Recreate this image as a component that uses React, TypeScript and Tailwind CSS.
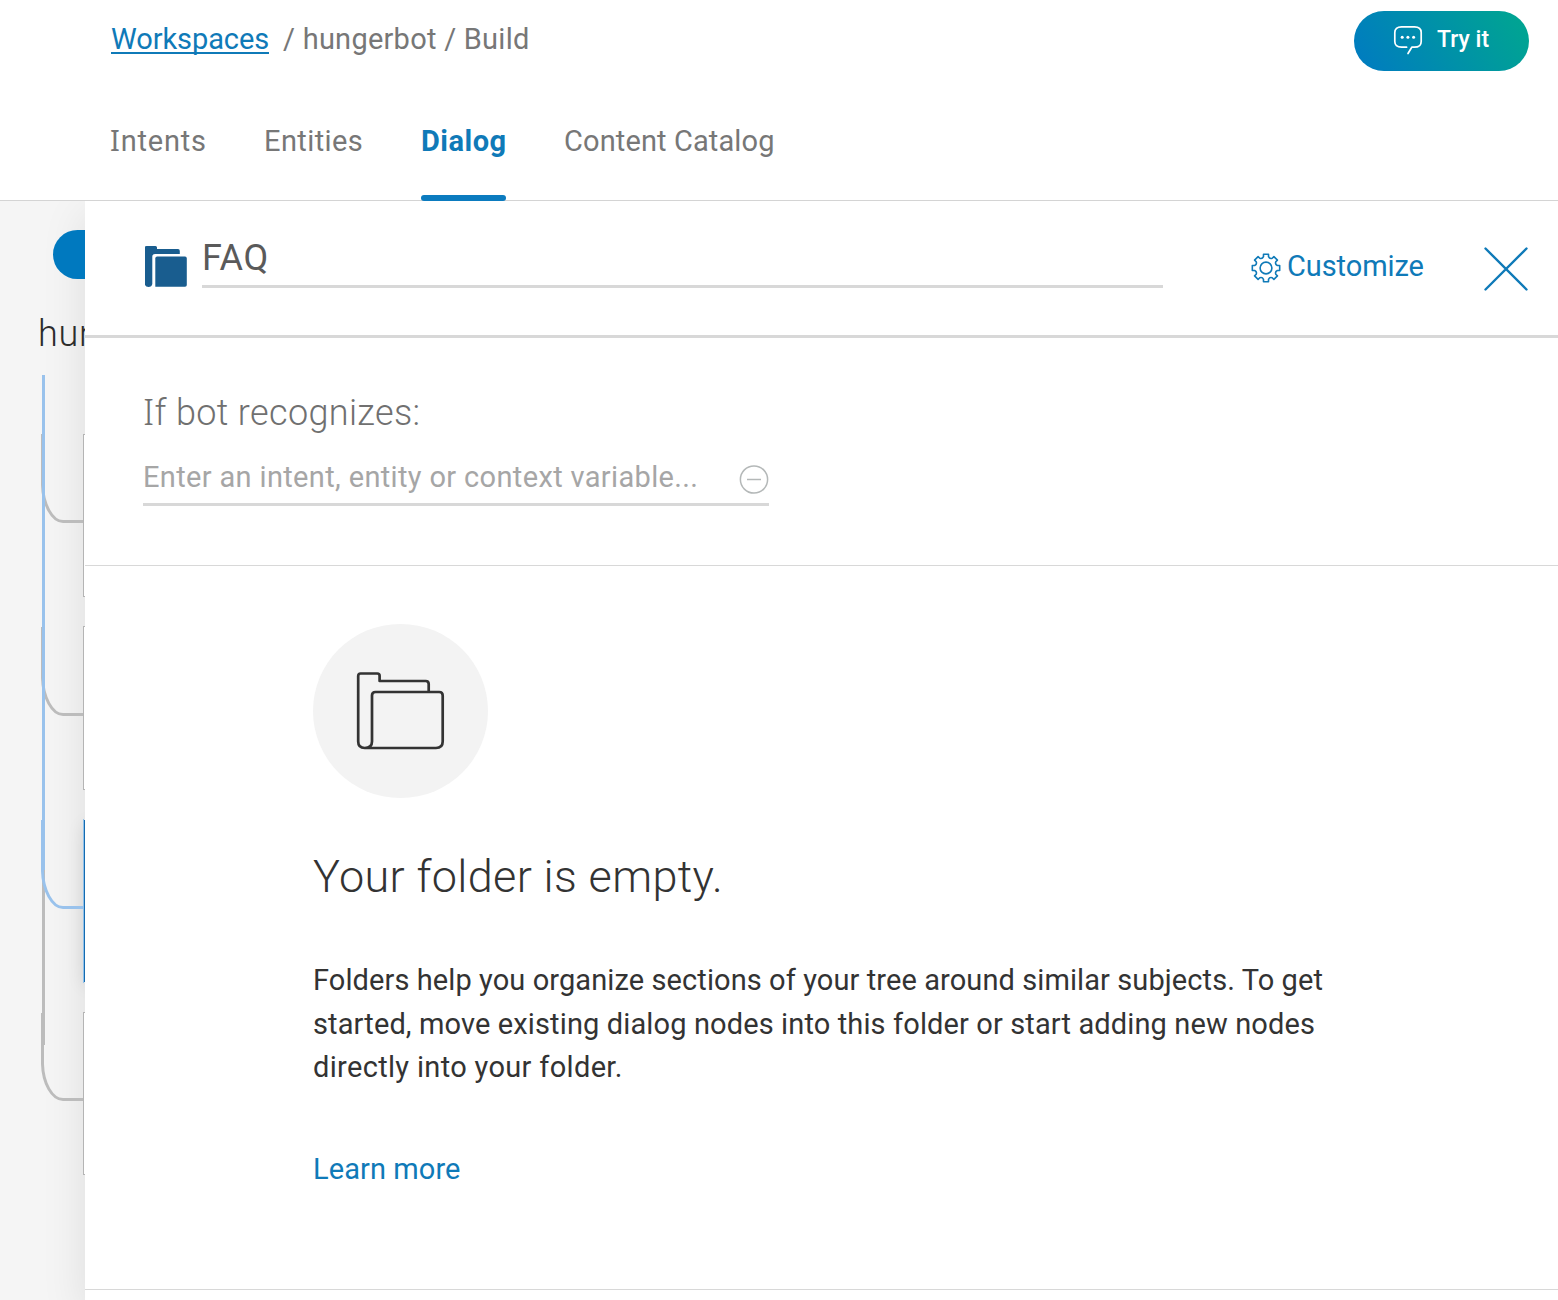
import React from "react";

const TABS = [
  { label: "Intents", active: false, cls: "w-[95px] tracking-[0.8px] -ml-px mr-[59px]" },
  { label: "Entities", active: false, cls: "w-[98px] tracking-[0.4px] mr-[59px]" },
  { label: "Dialog", active: true, cls: "w-[85px] tracking-[0.5px] mr-[58px]" },
  { label: "Content Catalog", active: false, cls: "tracking-[0.12px]" },
];

function SlabI({ text }: { text: string }) {
  if (!text.startsWith("I")) return <>{text}</>;
  return (
    <>
      <span className="font-['Noto_Sans',sans-serif] leading-[0]">I</span>
      {text.slice(1)}
    </>
  );
}

function ChatIcon() {
  return (
    <svg className="-mt-px" width="30" height="31" viewBox="0 0 30 31" fill="none" stroke="currentColor" strokeWidth="1.7" strokeLinecap="round" strokeLinejoin="round">
      <path d="M13.6 22.2H8.5C4 22.2 1.8 20 1.8 16.5V7.5C1.8 4 4 1.8 8.5 1.8H21.5C26 1.8 28.2 4 28.2 7.5V16.5C28.2 20 26 22.2 21.5 22.2H18.8L15 28.5" />
      <g fill="currentColor" stroke="none">
        <circle cx="9.2" cy="12.3" r="1.5" />
        <circle cx="14.9" cy="12.3" r="1.5" />
        <circle cx="20.6" cy="12.3" r="1.5" />
      </g>
    </svg>
  );
}

function gearPath() {
  const at = (r: number, a: number) =>
    `${(15 + r * Math.cos(a)).toFixed(2)} ${(15 + r * Math.sin(a)).toFixed(2)}`;
  let d = "";
  for (let i = 0; i < 8; i++) {
    const a = (i * Math.PI) / 4;
    const mid = a + Math.PI / 8;
    d += `${i === 0 ? "M" : "L"}${at(11.6, a - 0.22)}L${at(13.9, a - 0.18)}L${at(13.9, a + 0.18)}L${at(11.6, a + 0.22)}`;
    d += `Q${at(9.6, mid)} ${at(11.6, a + Math.PI / 4 - 0.22)}`;
  }
  return d + "Z";
}

function GearIcon() {
  return (
    <svg className="mt-[7px]" width="30" height="30" viewBox="0 0 30 30" fill="none" stroke="currentColor" strokeWidth="1.6" strokeLinejoin="round">
      <path d={gearPath()} />
      <circle cx="15" cy="15" r="5.9" />
    </svg>
  );
}

function FolderSolidIcon() {
  return (
    <svg className="mt-[45px] shrink-0 text-[#195d8f]" width="43" height="41" viewBox="0.5 0 43 41" fill="currentColor">
      <path d="M0 2Q0 0 2 0H11Q12.5 0 12.5 1.500V3H33.500Q35.300 3 35.300 5V8H10.500Q7.800 8 7.800 10.500V38Q7.300 41 4 41Q0 41 0 36.500Z" />
      <path d="M10.800 12.500Q10.800 10.600 12.700 10.600H40.500Q42.300 10.600 42.300 12.500V39Q42.300 40.800 40.500 40.800H10.800Z" />
    </svg>
  );
}

function FolderOutlineIcon() {
  return (
    <svg width="175" height="175" viewBox="0 0 175 175" fill="none" stroke="#333" strokeWidth="2.7" strokeLinejoin="round">
      <path d="M115.700 68V60Q115.700 57 112.700 57H66.600V51.800Q66.600 49.500 64.300 49.500H47.600Q45.200 49.500 45.200 52V117.500Q45.200 124 51.700 124H123Q129.700 124 129.700 117.500V71.500Q129.700 68 126.200 68H62.500Q59 68 59 71.500V117.500Q59 124 51.700 124" />
    </svg>
  );
}

function TreeLines() {
  return (
    <svg className="absolute left-0 top-0" width="85" height="1099" viewBox="0 201 85 1099" fill="none" strokeWidth="3">
      <g stroke="#bcbcbc">
        <path d="M42.500 434V485C43 504 52 521.500 63 521.500H83" />
        <path d="M42.500 627V678C43 697 52 714.500 63 714.500H83" />
        <path d="M43.500 860V1045" />
        <path d="M42.500 1013V1064C43 1083 52 1099.500 63 1099.500H83" />
      </g>
      <g stroke="#99c2ec">
        <path d="M43.500 375V870" />
        <path d="M42.500 820V871C43 890 52 907.500 63 907.500H83" />
      </g>
      <g stroke="#b4b4b4" strokeWidth="1" fill="#fff">
        <rect x="83.500" y="434.500" width="40" height="162" />
        <rect x="83.500" y="626.500" width="40" height="163" />
        <rect x="83.500" y="1012.500" width="40" height="162" />
      </g>
      <path d="M83.500 819V983" stroke="#8fc0ea" strokeWidth="1" />
      <path d="M84.500 820V982" stroke="#146bb0" strokeWidth="1" />
    </svg>
  );
}

export default function App() {
  return (
    <div className="flex h-[1300px] w-[1558px] flex-col overflow-hidden bg-white font-['Roboto',sans-serif] text-[29px] leading-[40px] text-[#777]">
      <header className="relative z-20 flex h-[201px] shrink-0 flex-col border-b border-[#d4d4d4] pl-[111px]">
        <div className="flex h-[121px] shrink-0 items-start justify-between pr-[29px]">
          <div className="flex pt-[19px]">
            <a className="h-[35px] w-[158px] whitespace-nowrap border-b-2 border-[#0f7ab8] tracking-[-0.080px] text-[#0f7ab8]">Workspaces</a>
            <span className="ml-[14px] tracking-[0.250px]">/ hungerbot / Build</span>
          </div>
          <button className="mt-[11px] flex h-[60px] w-[175px] items-center rounded-full bg-linear-[58deg,#007ac2_0%,#00a78f_100%] pl-[39px] text-[23px] font-medium leading-[30px] text-white">
            <ChatIcon />
            <span className="-mt-[2px] ml-[14px] whitespace-nowrap">Try it</span>
          </button>
        </div>
        <nav className="flex">
          {TABS.map((t) => (
            <div key={t.label} className={`relative h-[80px] whitespace-nowrap ${t.cls} ${t.active ? "font-bold text-[#0f7ab8]" : ""}`}>
              <SlabI text={t.label} />
              {t.active && <span className="absolute inset-x-0 top-[74px] h-[6px] rounded-[3px] bg-[#0b7bbf]" />}
            </div>
          ))}
        </nav>
      </header>

      <div className="relative flex flex-1 overflow-hidden bg-[#f5f5f5]">
        <aside className="relative z-10 h-full w-[85px] shrink-0 overflow-hidden">
          <div className="absolute left-[84px] top-[620px] h-[160px] w-[40px] shadow-[0_4px_18px_rgba(0,0,0,0.10)]" />
          <TreeLines />
          <div className="ml-[53px] mt-[29px] h-[49px] w-[160px] rounded-full bg-[#0079bf]" />
          <div className="ml-[38px] mt-[33px] text-[36px] font-[350] leading-[44px] tracking-[0.700px] text-[#2c2c2c]">hungerbot</div>
        </aside>
        <main className="flex-1 bg-white shadow-[0_14px_42px_rgba(0,0,0,0.10)]">
          <div className="flex h-[137px] items-start border-b-3 border-[#d8d8d8] pl-[60px] pr-[30px]">
            <FolderSolidIcon />
            <div className="ml-[14px] mt-[35px] w-[961px] border-b-3 border-[#d8d8d8] pb-[5px] text-[36px] leading-[44px] tracking-[0.600px] text-[#5a5a5a]">FAQ</div>
            <button className="ml-[88px] mt-[45px] flex items-start text-[#0f7ab8]">
              <GearIcon />
              <span className="ml-[6px] tracking-[-0.080px]">Customize</span>
            </button>
            <svg className="ml-auto mt-[46px]" width="44" height="44" viewBox="0 0 44 44" stroke="#0f7ab8" strokeWidth="2.400" strokeLinecap="round">
              <path d="M1.500 1.500L42.500 42.500M42.500 1.500L1.500 42.500" />
            </svg>
          </div>

          <section className="h-[228px] border-b border-[#d8d8d8] pl-[58px] pt-[53px]">
            <h2 className="text-[36px] font-[350] leading-[44px] tracking-[0.350px] text-[#707070]">
              <SlabI text="If bot recognizes:" />
            </h2>
            <div className="mt-[22px] flex h-[49px] w-[626px] justify-between border-b-3 border-[#d8d8d8]">
              <span className="whitespace-nowrap tracking-[0.350px] text-[#a6a6a6]">Enter an intent, entity or context variable...</span>
              <svg className="mt-[8px]" width="30" height="30" viewBox="0 0 30 30" fill="none" stroke="#b4b8b8" strokeWidth="1.500">
                <circle cx="15" cy="14.500" r="13.600" />
                <path d="M8 14.500H22" />
              </svg>
            </div>
          </section>

          <section className="h-[724px] border-b border-[#d8d8d8] pl-[228px] pt-[58px] text-[#333]">
            <div className="h-[174px] w-[175px] rounded-full bg-[#f3f3f3]">
              <FolderOutlineIcon />
            </div>
            <h1 className="mt-[51px] text-[45px] font-light leading-[56px] tracking-[0.360px]">Your folder is empty.</h1>
            <p className="mt-[54px] whitespace-nowrap leading-[43.500px]">
              <span className="block tracking-[0.092px]">Folders help you organize sections of your tree around similar subjects. To get</span>
              <span className="block tracking-[0.125px]">started, move existing dialog nodes into this folder or start adding new nodes</span>
              <span className="block tracking-[0.330px]">directly into your folder.</span>
            </p>
            <a className="mt-[59px] block tracking-[0.080px] text-[#0f7ab8]">Learn more</a>
          </section>
        </main>
      </div>
    </div>
  );
}
